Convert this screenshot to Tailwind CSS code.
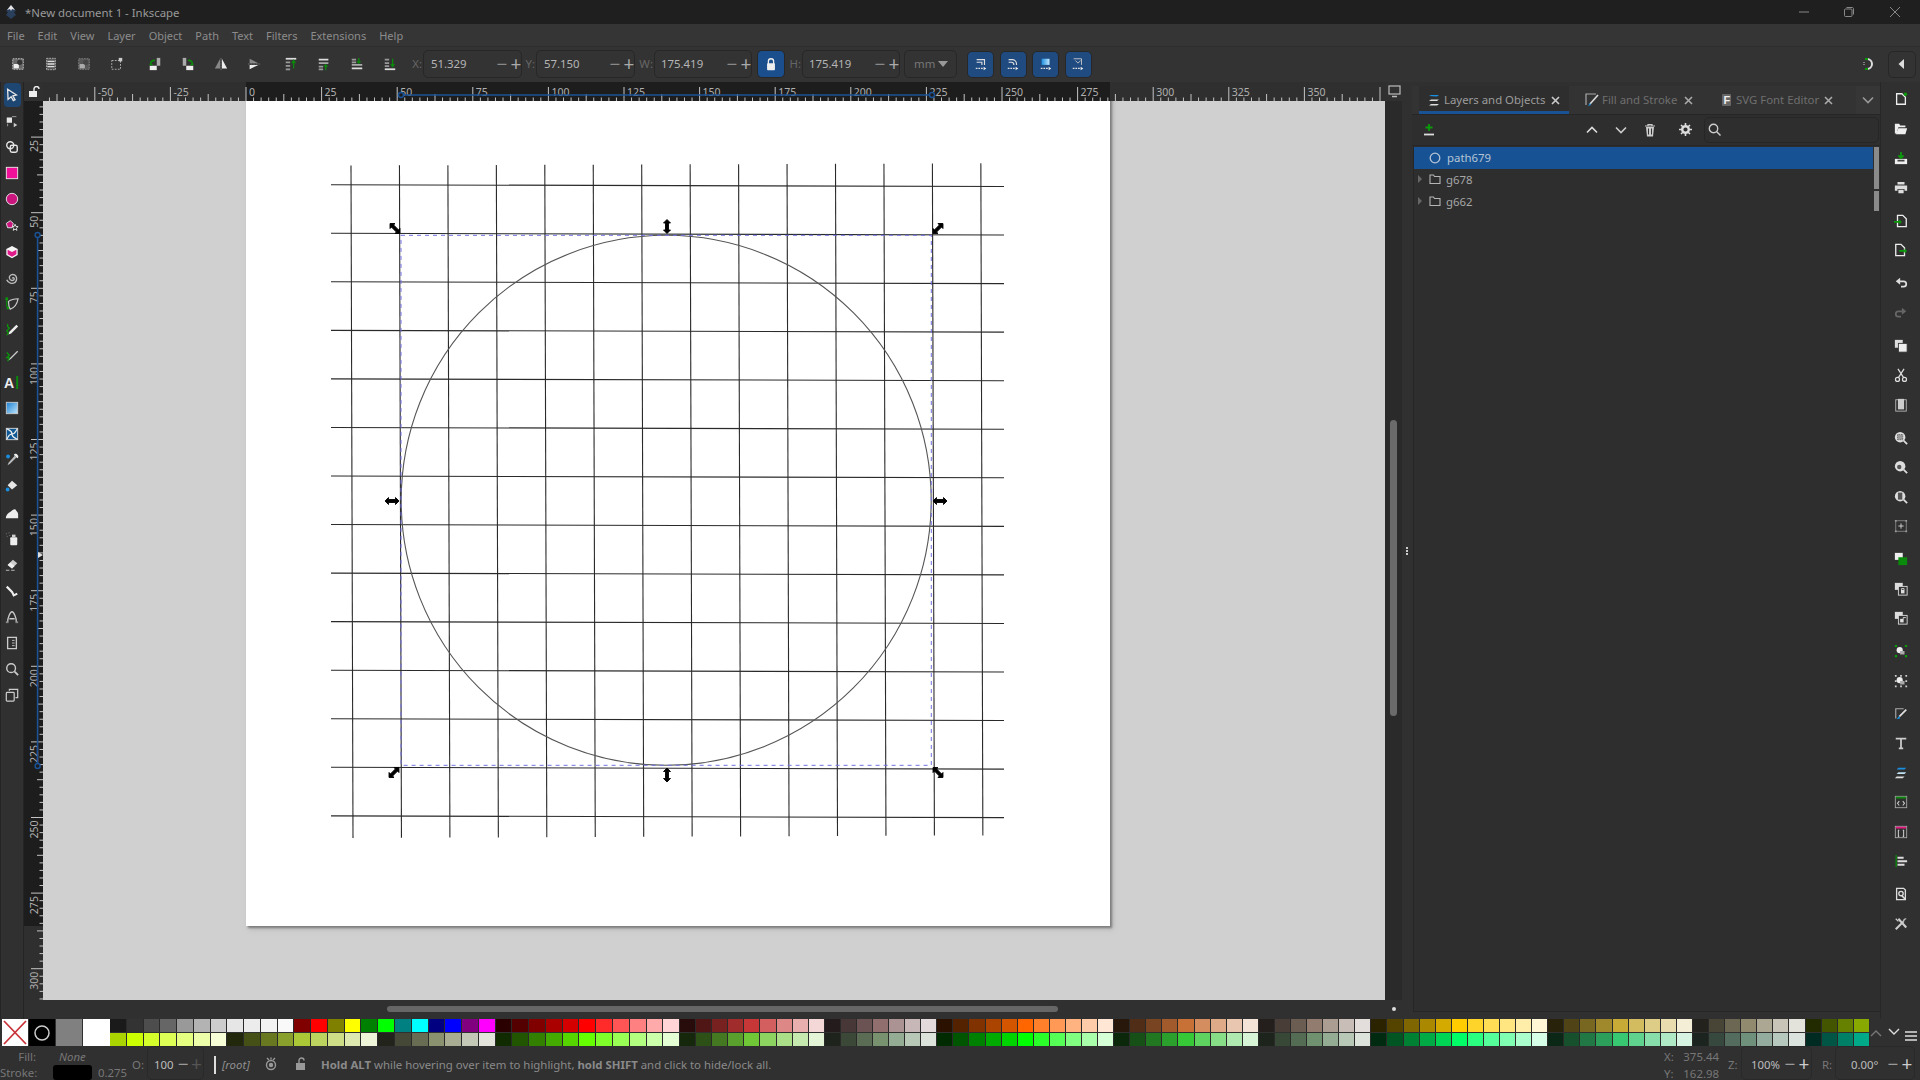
<!DOCTYPE html>
<html lang="en">
<head>
<meta charset="UTF-8">
<script src="https://cdn.jsdelivr.net/npm/@tailwindcss/browser@4"></script>
<title>*New document 1 - Inkscape</title>
</head>
<body class="w-[1920px] h-[1080px] overflow-hidden flex flex-col bg-[#303030] font-['Noto_Sans',sans-serif] text-[11.4px] text-[#a3a3a3]">

<!-- title bar -->
<div class="h-[24px] bg-[#1f1f1f] flex items-center">
  <svg class="w-4 h-4 ml-[3px]" viewBox="0 0 16 16"><path d="M8 1l5 6-2 1 2 3-5 4-5-4 2-3-2-1z" fill="#2a3f5c"/><path d="M8 1l4 5-3-1-1 2-1-2-3 1z" fill="#e6e6e6"/></svg>
  <span class="ml-[6px] pt-[2px] text-[#9a9a9a]">*New document 1 - Inkscape</span>
  <div class="ml-auto flex items-center h-full">
    <svg class="w-[12px] h-[12px] mr-[33px]" viewBox="0 0 12 12"><path d="M1 6h10" stroke="#888"/></svg>
    <svg class="w-[12px] h-[12px] mr-[34px]" viewBox="0 0 12 12" fill="none" stroke="#888"><rect x="1.5" y="3" width="7.5" height="7.5" rx="1"/><path d="M3.5 1.5h6a1.5 1.5 0 0 1 1 1v6"/></svg>
    <svg class="w-[12px] h-[12px] mr-[19px]" viewBox="0 0 12 12"><path d="M1 1l10 10M11 1L1 11" stroke="#888"/></svg>
  </div>
</div>

<!-- menu -->
<div class="h-[22px] bg-[#353535] flex items-center gap-[13px] pl-[7px] pt-[3px] text-[11px] text-[#8c8c8c]">
  <span>File</span><span>Edit</span><span>View</span><span>Layer</span><span>Object</span><span>Path</span><span>Text</span><span>Filters</span><span>Extensions</span><span>Help</span>
</div>

<!-- tool controls -->
<div class="h-[36px] bg-[#333333] border-t border-[#2e2e2e] flex items-center pl-[1px] pb-[1px]">
  <div class="w-[33px] flex justify-center"><svg class="w-[14px] h-[14px]" viewBox="0 0 16 16"><rect x="2" y="2" width="12" height="12" fill="#666" stroke="#ccc" stroke-dasharray="2 1"/><rect x="3" y="8" width="6" height="5" fill="#eee"/><circle cx="10" cy="6" r="3" fill="#333"/></svg></div>
  <div class="w-[33px] flex justify-center"><svg class="w-[14px] h-[14px]" viewBox="0 0 16 16"><rect x="3" y="1.5" width="10" height="13" fill="#555" stroke="#bbb" stroke-dasharray="2 1"/><path d="M4 5h8M4 8h8M4 11h8" stroke="#ddd" stroke-width="1.5"/></svg></div>
  <div class="w-[33px] flex justify-center"><svg class="w-[14px] h-[14px]" viewBox="0 0 16 16"><rect x="2" y="2" width="12" height="12" fill="#555" stroke="#888" stroke-dasharray="2 1"/><rect x="3" y="8" width="6" height="5" fill="#aaa"/><circle cx="10" cy="6" r="3" fill="#444"/></svg></div>
  <div class="w-[33px] flex justify-center"><svg class="w-[14px] h-[14px]" viewBox="0 0 16 16"><rect x="2" y="4" width="10" height="10" fill="none" stroke="#bbb" stroke-dasharray="2 1.5"/><rect x="10" y="1" width="4" height="4" fill="#ccc"/></svg></div>
  <div class="ml-[5px] w-[33px] flex justify-center"><svg class="w-[14px] h-[14px]" viewBox="0 0 16 16"><rect x="2" y="10" width="8" height="5" fill="#eee"/><rect x="10" y="1" width="4" height="9" fill="#aaa"/><path d="M3 8a4 4 0 0 1 5-4" fill="none" stroke="#0a8a0a" stroke-width="2"/><path d="M1 8h5l-2.500 2z" fill="#0a8a0a"/></svg></div>
  <div class="w-[33px] flex justify-center"><svg class="w-[14px] h-[14px]" viewBox="0 0 16 16"><rect x="6" y="10" width="8" height="5" fill="#eee"/><rect x="2" y="1" width="4" height="9" fill="#aaa"/><path d="M13 8a4 4 0 0 0-5-4" fill="none" stroke="#0a8a0a" stroke-width="2"/><path d="M15 8h-5l2.500 2z" fill="#0a8a0a"/></svg></div>
  <div class="w-[33px] flex justify-center"><svg class="w-[14px] h-[14px]" viewBox="0 0 16 16"><path d="M7 2v11L1 13z" fill="#888"/><path d="M9 2v11l6 0z" fill="#eee"/><path d="M8 1v14" stroke="#777" stroke-dasharray="2 1"/></svg></div>
  <div class="w-[33px] flex justify-center"><svg class="w-[14px] h-[14px]" viewBox="0 0 16 16"><path d="M3 7h10L3 2z" fill="#888"/><path d="M3 9h10L3 14z" fill="#eee"/><path d="M1 8h14" stroke="#777" stroke-dasharray="2 1"/></svg></div>
  <div class="ml-[4px] w-[33px] flex justify-center"><svg class="w-[14px] h-[14px]" viewBox="0 0 16 16"><path d="M2 2h12" stroke="#ddd" stroke-width="2"/><path d="M2 6h5M2 10h5M2 14h5" stroke="#999" stroke-width="2"/><path d="M11 13V5M9 7l2-3 2 3" fill="none" stroke="#0a8a0a" stroke-width="1.500"/></svg></div>
  <div class="w-[33px] flex justify-center"><svg class="w-[14px] h-[14px]" viewBox="0 0 16 16"><path d="M2 3h11" stroke="#ddd" stroke-width="2"/><path d="M2 7h11" stroke="#aaa" stroke-width="2"/><path d="M2 11h5M2 14h5" stroke="#999" stroke-width="2"/><path d="M10 15v-5M8 11l2-2 2 2" fill="none" stroke="#0a8a0a" stroke-width="1.500"/></svg></div>
  <div class="w-[33px] flex justify-center"><svg class="w-[14px] h-[14px]" viewBox="0 0 16 16"><path d="M2 9h12" stroke="#aaa" stroke-width="2"/><path d="M2 13h12" stroke="#ddd" stroke-width="2"/><path d="M2 3h5M2 6h5" stroke="#999" stroke-width="2"/><path d="M10 1v5M8 5l2 2 2-2" fill="none" stroke="#0a8a0a" stroke-width="1.500"/></svg></div>
  <div class="w-[33px] flex justify-center"><svg class="w-[14px] h-[14px]" viewBox="0 0 16 16"><path d="M2 14h12" stroke="#ddd" stroke-width="2"/><path d="M2 3h5M2 7h5M2 10.500h5" stroke="#999" stroke-width="2"/><path d="M11 2v8M9 8l2 3 2-3" fill="none" stroke="#0a8a0a" stroke-width="1.500"/></svg></div>

  <span class="w-[17px] pr-[1px] text-right text-[#666]">X:</span>
  <div class="w-[99px] h-[28px] border border-[#272727] rounded-[5px] flex items-center pl-[7px] text-[#b5b5b5]"><span class="flex-1">51.329</span><span class="w-[14px] text-center text-[19px] text-[#888]">−</span><span class="w-[14px] mr-[-2px] text-center text-[19px] text-[#aaa]">+</span></div>
  <span class="w-[14px] text-right pr-[1px] text-[#666]">Y:</span>
  <div class="w-[99px] h-[28px] border border-[#272727] rounded-[5px] flex items-center pl-[7px] text-[#b5b5b5]"><span class="flex-1">57.150</span><span class="w-[14px] text-center text-[19px] text-[#888]">−</span><span class="w-[14px] mr-[-2px] text-center text-[19px] text-[#aaa]">+</span></div>
  <span class="w-[19px] text-right pr-[1px] text-[#666]">W:</span>
  <div class="w-[98px] h-[28px] border border-[#272727] rounded-[5px] flex items-center pl-[6px] text-[#b5b5b5]"><span class="flex-1">175.419</span><span class="w-[14px] text-center text-[19px] text-[#888]">−</span><span class="w-[14px] mr-[-2px] text-center text-[19px] text-[#aaa]">+</span></div>
  <div class="ml-[5px] w-[28px] h-[28px] rounded-[5px] border border-[#272727] bg-[#1a4e8c] flex items-center justify-center"><svg class="w-[14px] h-[14px]" viewBox="0 0 16 16"><path d="M5 8V5a3 3 0 0 1 6 0v3" fill="none" stroke="#eee" stroke-width="1.500"/><rect x="3.500" y="7" width="9" height="8" rx="1" fill="#eee"/></svg></div>
  <span class="w-[17px] text-right pr-[1px] text-[#666]">H:</span>
  <div class="w-[98px] h-[28px] border border-[#272727] rounded-[5px] flex items-center pl-[6px] text-[#b5b5b5]"><span class="flex-1">175.419</span><span class="w-[14px] text-center text-[19px] text-[#888]">−</span><span class="w-[14px] mr-[-2px] text-center text-[19px] text-[#aaa]">+</span></div>
  <div class="ml-[4px] w-[53px] h-[28px] border border-[#272727] rounded-[5px] flex items-center pl-[9px] text-[#777]"><span>mm</span><svg class="w-[10px] h-[10px] ml-[3px]" viewBox="0 0 10 10"><path d="M0 2h10L5 8z" fill="#999"/></svg></div>

  <div class="ml-[10px] w-[27px] h-[27px] rounded-[5px] border border-[#272727] bg-[#1f4b80] flex items-center justify-center"><svg class="w-[14px] h-[14px]" viewBox="0 0 16 16"><path d="M3 3h9v6M3 6h6v3" fill="none" stroke="#ddd" stroke-width="1.300"/><path d="M2 13h9" stroke="#ddd" stroke-dasharray="2 1" stroke-width="1.500"/><path d="M11 11l3 2-3 2z" fill="#eee"/></svg></div>
  <div class="ml-[5.5px] w-[27px] h-[27px] rounded-[5px] border border-[#272727] bg-[#1f4b80] flex items-center justify-center"><svg class="w-[14px] h-[14px]" viewBox="0 0 16 16"><path d="M3 3h4a5 5 0 0 1 5 5v1M3 6h3a3 3 0 0 1 3 3" fill="none" stroke="#ddd" stroke-width="1.300"/><path d="M2 13h9" stroke="#ddd" stroke-dasharray="2 1" stroke-width="1.500"/><path d="M11 11l3 2-3 2z" fill="#eee"/></svg></div>
  <div class="ml-[5.5px] w-[27px] h-[27px] rounded-[5px] border border-[#272727] bg-[#1f4b80] flex items-center justify-center"><svg class="w-[14px] h-[14px]" viewBox="0 0 16 16"><defs><linearGradient id="g1" x1="0" y1="0" x2="1" y2="0"><stop offset="0" stop-color="#1e90e0"/><stop offset="1" stop-color="#bfe6ff"/></linearGradient></defs><rect x="3" y="2" width="9" height="7" fill="url(#g1)"/><path d="M2 13h9" stroke="#ddd" stroke-dasharray="2 1" stroke-width="1.500"/><path d="M11 11l3 2-3 2z" fill="#eee"/></svg></div>
  <div class="ml-[5.5px] w-[27px] h-[27px] rounded-[5px] border border-[#272727] bg-[#1f4b80] flex items-center justify-center"><svg class="w-[14px] h-[14px]" viewBox="0 0 16 16"><path d="M3 2h9v7" fill="none" stroke="#ccc"/><path d="M5 4l3 3 3-3" fill="none" stroke="#ccc"/><path d="M2 13h9" stroke="#ddd" stroke-dasharray="2 1" stroke-width="1.500"/><path d="M11 11l3 2-3 2z" fill="#eee"/></svg></div>

  <svg class="w-4 h-4 ml-auto mr-[11px]" viewBox="0 0 16 16"><path d="M6 3a5 5 0 0 1 0 10" fill="none" stroke="#ddd" stroke-width="2"/><path d="M4 2h3v2H4zM4 12h3v2H4z" fill="#0a9a0a"/><path d="M3 6v4" stroke="#ccc" stroke-dasharray="1 1"/></svg>
  <div class="w-[28px] h-[27px] mr-[4px] border border-[#272727] rounded-[5px] flex items-center justify-center"><svg class="w-3 h-3" viewBox="0 0 12 12"><path d="M8 1v10L2.500 6z" fill="#ddd"/></svg></div>
</div>

<!-- main row -->
<div class="h-[937px] flex">
  <!-- left toolbox -->
  <div class="w-[24px] flex flex-col items-center border-l border-r border-[#242424]">
    <div class="w-[17px] h-[24px] mb-[1.1px] mt-[1px] rounded-[4px] bg-[#1e4673] flex items-center justify-center"><svg class="w-[14px] h-[14px]" viewBox="0 0 16 16"><path d="M3 1.500l10 6.500-4 1 2.500 4.500-2 1-2.500-4.500-3.500 3z" fill="#1e4673" stroke="#e8e8e8" stroke-width="1.500"/></svg></div>
    <div class="h-[26.1px] flex items-center"><svg class="w-[14px] h-[14px]" viewBox="0 0 16 16"><rect x="2" y="4" width="6" height="6" fill="#e6e6e6"/><path d="M8 3h5M3 11v3" stroke="#aaa"/><path d="M10 10l4 2.500-4 2.500z" fill="#ccc"/></svg></div>
    <div class="h-[26.1px] flex items-center"><svg class="w-[14px] h-[14px]" viewBox="0 0 16 16" fill="none" stroke="#e6e6e6" stroke-width="1.600"><circle cx="6" cy="6" r="4"/><rect x="6" y="6" width="8" height="8" rx="2"/></svg></div>
    <div class="h-[26.1px] flex items-center"><svg class="w-[14px] h-[14px]" viewBox="0 0 16 16"><rect x="1.500" y="1.500" width="13" height="13" fill="#f0109a" stroke="#eee"/></svg></div>
    <div class="h-[26.1px] flex items-center"><svg class="w-[14px] h-[14px]" viewBox="0 0 16 16"><circle cx="8" cy="8" r="6.500" fill="#c9157d" stroke="#eee"/></svg></div>
    <div class="h-[26.1px] flex items-center"><svg class="w-[14px] h-[14px]" viewBox="0 0 16 16"><path d="M6 2l3.500 3-1.500 5-5 0L1.500 5z" fill="#c9157d" stroke="#eee"/><path d="M11.500 6l1 2.500 2.500.2-2 1.800.6 2.500-2.100-1.400-2.100 1.400.6-2.500-2-1.800 2.500-.2z" fill="#333" stroke="#eee"/></svg></div>
    <div class="h-[26.1px] flex items-center"><svg class="w-[14px] h-[14px]" viewBox="0 0 16 16"><path d="M8 1l6.500 3.500v7L8 15l-6.500-3.500v-7z" fill="#f4f4f4"/><path d="M8 8L3 5.300v5.200L8 13.500zM8 8l5-2.700v5.200L8 13.500z" fill="#e01a8a"/></svg></div>
    <div class="h-[26.1px] flex items-center"><svg class="w-[14px] h-[14px]" viewBox="0 0 16 16"><path d="M8.500 8.500c0-1.500 2.500-1 2 1-.6 2-5 2-5.500-1.500C4.500 5 8 3 11 4.500c3 1.700 3 6.500.5 8.500-3 2.200-8 1-9.500-3" fill="none" stroke="#bbb" stroke-width="1.600"/></svg></div>
    <div class="h-[26.1px] flex items-center"><svg class="w-[14px] h-[14px]" viewBox="0 0 16 16"><path d="M2 2v9" stroke="#0a8a0a" stroke-width="1.500"/><rect x="0.500" y="0.500" width="3" height="3" fill="#0a9a0a"/><rect x="2" y="11" width="3" height="3" fill="#0a9a0a"/><path d="M4 5c4-3 8-3 11-3-1 5-3 10-9 12-2-3-2-6-2-9z" fill="none" stroke="#ccc" stroke-width="1.400"/></svg></div>
    <div class="h-[26.1px] flex items-center"><svg class="w-[14px] h-[14px]" viewBox="0 0 16 16"><path d="M3 1v3l2 2-3 3 2 2-2 3" fill="none" stroke="#0a9a0a" stroke-width="1.400"/><path d="M13 2l2 2-8 8-3 1 1-3z" fill="#eee"/></svg></div>
    <div class="h-[26.1px] flex items-center"><svg class="w-[14px] h-[14px]" viewBox="0 0 16 16"><path d="M2 4l3 3-3 3 3 0-2 4" fill="none" stroke="#0a9a0a" stroke-width="1.400"/><path d="M14 2l1 1-8 8-3 2 2-3z" fill="#ccc"/></svg></div>
    <div class="h-[26.1px] flex items-center"><svg class="w-[17px] h-[15px]" viewBox="0 0 18 16"><text x="0" y="14" font-size="15" font-weight="700" font-family="Liberation Sans" fill="#eee">A</text><rect x="13" y="1" width="2" height="14" fill="#0a8a0a"/></svg></div>
    <div class="h-[26.1px] flex items-center"><svg class="w-[14px] h-[14px]" viewBox="0 0 16 16"><defs><linearGradient id="g2" x1="0" y1="0" x2="1" y2="1"><stop offset="0" stop-color="#1a7fd0"/><stop offset="1" stop-color="#bfe6ff"/></linearGradient></defs><rect x="1.500" y="1.500" width="13" height="13" fill="url(#g2)" stroke="#ccc"/></svg></div>
    <div class="h-[26.1px] flex items-center"><svg class="w-[14px] h-[14px]" viewBox="0 0 16 16"><rect x="1.500" y="1.500" width="13" height="13" fill="#0f5a96" stroke="#ddd"/><path d="M8 8C8 4 5 4 2 2M8 8c4 0 4-3 6-6M8 8c0 4 3 4 6 6M8 8c-4 0-4 3-6 6" fill="none" stroke="#eee" stroke-width="1.400"/></svg></div>
    <div class="h-[26.1px] flex items-center"><svg class="w-[14px] h-[14px]" viewBox="0 0 16 16"><circle cx="3.500" cy="4" r="2.200" fill="#1a8fe0"/><path d="M11 3l2 2-7 7-3 2 1-3z" fill="#bbb"/><path d="M10 2l4 4 1-1c1-2-2-5-4-4z" fill="#eee"/></svg></div>
    <div class="h-[26.1px] flex items-center"><svg class="w-[14px] h-[14px]" viewBox="0 0 16 16"><path d="M8 2l6 5-6 5-5-5z" fill="#e6e6e6"/><circle cx="3" cy="12" r="2.200" fill="#1a8fe0"/></svg></div>
    <div class="h-[26.1px] flex items-center"><svg class="w-[14px] h-[14px]" viewBox="0 0 16 16"><path d="M1 14c0-4 3-6 6-8 2-2 4-3 5-2 1 2 3 3 3 5v5z" fill="#eee"/></svg></div>
    <div class="h-[26.1px] flex items-center"><svg class="w-[14px] h-[14px]" viewBox="0 0 16 16"><rect x="6" y="6" width="8" height="9" rx="1" fill="#eee"/><rect x="8" y="3" width="4" height="3" fill="#ccc"/><path d="M1 2h1M4 1h1M2 5h1M5 4h1" stroke="#888"/></svg></div>
    <div class="h-[26.1px] flex items-center"><svg class="w-[14px] h-[14px]" viewBox="0 0 16 16"><path d="M3 8l6-6 5 4-6 6z" fill="#ccc"/><path d="M3 8l3-3 5 4-3 3z" fill="#eee"/><path d="M1 14h4M7 14h4" stroke="#ccc"/></svg></div>
    <div class="h-[26.1px] flex items-center"><svg class="w-[14px] h-[14px]" viewBox="0 0 16 16"><path d="M2 3l6 6 2 4 4-2" fill="none" stroke="#eee" stroke-width="2.500"/></svg></div>
    <div class="h-[26.1px] flex items-center"><svg class="w-[14px] h-[14px]" viewBox="0 0 16 16"><path d="M3 14c0-5 3-12 5-12s5 7 5 12M5 10h6" fill="none" stroke="#ccc" stroke-width="1.500"/><rect x="1" y="13" width="3" height="2" fill="#888"/><rect x="12" y="13" width="3" height="2" fill="#888"/></svg></div>
    <div class="h-[26.1px] flex items-center"><svg class="w-[14px] h-[14px]" viewBox="0 0 16 16"><path d="M3 1.500h10v13H3z" fill="none" stroke="#ccc" stroke-width="1.500"/><path d="M8 5h3M8 8h3M8 11h3" stroke="#ccc"/></svg></div>
    <div class="h-[26.1px] flex items-center"><svg class="w-[14px] h-[14px]" viewBox="0 0 16 16"><circle cx="7" cy="7" r="5" fill="none" stroke="#ccc" stroke-width="1.600"/><path d="M11 11l4 4" stroke="#ccc" stroke-width="2"/></svg></div>
    <div class="h-[26.1px] flex items-center"><svg class="w-[14px] h-[14px]" viewBox="0 0 16 16" fill="none" stroke="#ccc" stroke-width="1.400"><rect x="1.500" y="5" width="9" height="10" rx="1"/><path d="M5 3V1.500h9.500V11H12"/></svg></div>
  </div>

  <!-- canvas column -->
  <div class="w-[1388px] flex flex-col">
    <div class="h-[19px] flex">
      <div class="w-[19px] bg-[#303030] flex items-center justify-center"><svg class="w-[12px] h-[12px]" viewBox="0 0 12 12"><rect x="1" y="5" width="8" height="6" fill="#eee"/><path d="M6 5V3a2.500 2.500 0 0 1 5 0" fill="none" stroke="#eee" stroke-width="1.400"/></svg></div>
      <svg id="rulerTop" class="w-[1342px] h-[19px] bg-[#2f2f2f]" viewBox="43 82 1342 19"><rect x="246" y="82" width="864" height="19" fill="#1d1d1d"/></svg>
      <div class="w-[18px] flex items-center justify-center"><svg class="w-[13px] h-[13px]" viewBox="0 0 13 13"><rect x="1" y="1" width="11" height="8" fill="none" stroke="#bbb" stroke-width="1.200"/><path d="M4 11.500h5" stroke="#bbb" stroke-width="1.500"/></svg></div>
    </div>
    <div class="h-[899px] flex">
      <svg id="rulerLeft" class="w-[19px] h-[899px] bg-[#2f2f2f]" viewBox="24 101 19 899"><rect x="24" y="101" width="19" height="825" fill="#1d1d1d"/></svg>
      <div class="relative w-[1342px] h-[899px] overflow-hidden bg-[#d0d0d0]">
        <div class="absolute left-[203px] top-[-40px] w-[864px] h-[865px] bg-white shadow-[2px_2px_2px_#7d7d7d,3px_3px_6px_#b5b5b5]"></div>
        <svg id="art" class="absolute left-0 top-0 w-[1342px] h-[899px]" viewBox="43 101 1342 899">
          <circle cx="666.2" cy="500.3" r="265" fill="none" stroke="#555" stroke-width="1.100"/>
          <rect x="401" y="235.300" width="530.300" height="530" fill="none" stroke="#7272e0" stroke-dasharray="4 4"/>
          <g fill="#000" stroke="#000" stroke-width="0.900">
            <path transform="translate(395 228.500) rotate(45)" d="M-7 0l3.500-3.500v2h7v-2L7 0 3.500 3.500v-2h-7v2z"/>
            <path transform="translate(667 226.500) rotate(90)" d="M-7 0l3.500-3.500v2h7v-2L7 0 3.500 3.500v-2h-7v2z"/>
            <path transform="translate(938 228.500) rotate(-45)" d="M-7 0l3.500-3.500v2h7v-2L7 0 3.500 3.500v-2h-7v2z"/>
            <path transform="translate(392 501)" d="M-7 0l3.500-3.500v2h7v-2L7 0 3.500 3.500v-2h-7v2z"/>
            <path transform="translate(940 501)" d="M-7 0l3.500-3.500v2h7v-2L7 0 3.500 3.500v-2h-7v2z"/>
            <path transform="translate(394 772.500) rotate(-45)" d="M-7 0l3.500-3.500v2h7v-2L7 0 3.500 3.500v-2h-7v2z"/>
            <path transform="translate(667 775) rotate(90)" d="M-7 0l3.500-3.500v2h7v-2L7 0 3.500 3.500v-2h-7v2z"/>
            <path transform="translate(938 772.500) rotate(45)" d="M-7 0l3.500-3.500v2h7v-2L7 0 3.500 3.500v-2h-7v2z"/>
          </g>
        </svg>
      </div>
      <div class="relative w-[17px] bg-[#2a2a2a] flex justify-center">
        <div class="mt-[319px] w-[7px] h-[296px] rounded-full bg-[#6b6b6b]"></div>
      </div>
      <div class="w-[10px] flex items-center justify-center"><div class="flex flex-col gap-[1px]"><div class="w-[2px] h-[2px] bg-[#ccc]"></div><div class="w-[2px] h-[2px] bg-[#ccc]"></div><div class="w-[2px] h-[2px] bg-[#ccc]"></div></div></div>
    </div>
    <div class="h-[19px] flex">
      <div class="ml-[363px] mt-[6px] w-[671px] h-[6px] rounded-full bg-[#666666]"></div>
      <div class="ml-[334px] mt-[7px] w-[4px] h-[4px] rounded-full bg-[#ddd]"></div>
    </div>
  </div>

  <!-- docked dialogs -->
  <div class="w-[468px] flex flex-col pb-[7px]">
    <div class="h-[29px] mt-[4px] flex items-stretch bg-[#333333] border-b border-[#262626]">
      <div class="ml-[7px] w-[150px] flex items-center bg-[#2e2e2e] border-b-[3px] border-[#1a5296] pl-[8px] pt-[3px]">
        <svg class="w-[14px] h-[14px]" viewBox="0 0 14 14"><path d="M2 3l2-1h8l-2 1.500z" fill="#1a8fe0"/><path d="M2 8l2-1.500h8L10 8z" fill="#ddd"/><path d="M2 12.500l2-1.500h8l-2 1.500z" fill="#ddd"/></svg>
        <span class="ml-[3px] text-[#9c9c9c]">Layers and Objects</span>
        <svg class="w-[9px] h-[9px] ml-[6px]" viewBox="0 0 9 9"><path d="M1 1l7 7M8 1L1 8" stroke="#ccc" stroke-width="1.600"/></svg>
      </div>
      <div class="w-[136px] flex items-center pl-[16px]">
        <svg class="w-[14px] h-[14px]" viewBox="0 0 14 14"><path d="M11 1H1v11" fill="none" stroke="#aaa" stroke-width="1.200"/><path d="M13 2L5 11" stroke="#ddd" stroke-width="1.600"/><path d="M5 10l-2 3 3-1z" fill="#1a8fe0"/></svg>
        <span class="ml-[3px] text-[#6f6f6f]">Fill and Stroke</span>
        <svg class="w-[9px] h-[9px] ml-[7px]" viewBox="0 0 9 9"><path d="M1 1l7 7M8 1L1 8" stroke="#aaa" stroke-width="1.600"/></svg>
      </div>
      <div class="w-[150px] flex items-center pl-[16px]">
        <svg class="w-[12px] h-[14px]" viewBox="0 0 12 14"><rect x="1" y="1" width="9" height="12" rx="1" fill="#666"/><text x="2.500" y="11" font-size="11" font-weight="700" font-family="Liberation Sans" fill="#eee">F</text></svg>
        <span class="ml-[3px] text-[#6f6f6f]">SVG Font Editor</span>
        <svg class="w-[9px] h-[9px] ml-[5px]" viewBox="0 0 9 9"><path d="M1 1l7 7M8 1L1 8" stroke="#aaa" stroke-width="1.600"/></svg>
      </div>
      <div class="ml-[1px] w-[24px] bg-[#363636] flex items-center justify-center"><svg class="w-[12px] h-[12px]" viewBox="0 0 12 12"><path d="M1 3.500l5 5 5-5" fill="none" stroke="#999" stroke-width="1.600"/></svg></div>
    </div>
    <div class="h-[31px] flex items-center bg-[#2e2e2e] border-b border-[#272727] pb-[1px]">
      <svg class="w-[14px] h-[14px] ml-[10px]" viewBox="0 0 14 14"><path d="M7 1v7M3.500 4.500h7" stroke="#0a9a0a" stroke-width="1.800"/><path d="M2 11.500h10" stroke="#ddd" stroke-width="1.800"/></svg>
      <svg class="w-[12px] h-[12px] ml-[150px]" viewBox="0 0 12 12"><path d="M1 8.500l5-5 5 5" fill="none" stroke="#ddd" stroke-width="1.600"/></svg>
      <svg class="w-[12px] h-[12px] ml-[17px]" viewBox="0 0 12 12"><path d="M1 3.500l5 5 5-5" fill="none" stroke="#ccc" stroke-width="1.600"/></svg>
      <svg class="w-[12px] h-[14px] ml-[17px]" viewBox="0 0 12 14"><path d="M1 3h10M4 3V1.500h4V3" fill="none" stroke="#ccc" stroke-width="1.200"/><path d="M2 4h8l-1 9.500H3z" fill="#ccc"/><path d="M4.500 5.500v6M7.500 5.500v6" stroke="#333"/></svg>
      <svg class="w-[13px] h-[13px] ml-[23px]" viewBox="0 0 13 13"><circle cx="6.500" cy="6.500" r="3.300" fill="none" stroke="#ddd" stroke-width="2.400"/><path d="M6.500 0v2.500M6.500 10.500V13M0 6.500h2.500M10.500 6.500H13M2 2l1.800 1.800M9.200 9.200L11 11M11 2L9.200 3.800M3.800 9.200L2 11" stroke="#ddd" stroke-width="1.600"/></svg>
      <div class="ml-[12px] w-[175px] h-[26px] border border-[#262626] rounded-[5px] flex items-center pl-[3px]"><svg class="w-[13px] h-[13px]" viewBox="0 0 13 13"><circle cx="5.500" cy="5.500" r="4.200" fill="none" stroke="#ccc" stroke-width="1.400"/><path d="M8.500 8.500l4 4" stroke="#ccc" stroke-width="1.400"/></svg></div>
    </div>
    <div class="flex-1 bg-[#2e2e2e] border-b border-l border-[#262626] ml-[1px] pt-[1px] text-[#a6a6a6]">
      <div class="h-[21.67px] flex items-center">
        <div class="w-[459px] h-full flex items-center bg-[#175394] pl-[15px] text-[#b5c4d6]"><svg class="w-[12px] h-[12px]" viewBox="0 0 12 12"><circle cx="6" cy="6" r="4.800" fill="none" stroke="#b5c4d6" stroke-width="1.300"/></svg><span class="ml-[6px]">path679</span></div>
        <div class="ml-[1px] w-[5px] h-full bg-[#8a8a8a]"></div>
      </div>
      <div class="h-[21.67px] flex items-center">
        <div class="w-[459px] h-full flex items-center pl-[3px]"><svg class="w-[6px] h-[8px]" viewBox="0 0 6 8"><path d="M1 0l4 4-4 4z" fill="#666"/></svg><svg class="w-[12px] h-[12px] ml-[6px]" viewBox="0 0 12 12"><path d="M1 2h3.500l1 1.500H11V10.500H1z" fill="none" stroke="#b5b5b5" stroke-width="1.100"/></svg><span class="ml-[5px]">g678</span></div>
        <div class="ml-[1px] w-[5px] h-[20px] bg-[#8a8a8a]"></div>
      </div>
      <div class="h-[21.67px] flex items-center">
        <div class="w-[459px] h-full flex items-center pl-[3px]"><svg class="w-[6px] h-[8px]" viewBox="0 0 6 8"><path d="M1 0l4 4-4 4z" fill="#666"/></svg><svg class="w-[12px] h-[12px] ml-[6px]" viewBox="0 0 12 12"><path d="M1 2h3.500l1 1.500H11V10.500H1z" fill="none" stroke="#b5b5b5" stroke-width="1.100"/></svg><span class="ml-[5px]">g662</span></div>
        <div class="ml-[1px] w-[5px] h-[20px] bg-[#8a8a8a]"></div>
      </div>
    </div>
  </div>

  <!-- commands bar -->
  <div class="w-[40px] border-l border-[#272727] pt-[2.25px] flex flex-col items-center text-[#ddd]">
    <div class="mb-[3.5px]">
      <div class="h-[29.5px] flex items-center"><svg class="w-[14px] h-[14px]" viewBox="0 0 16 16"><path d="M3 2h6l4 4v8H3z" fill="#333" stroke="#eee" stroke-width="1.500"/><circle cx="13" cy="2.500" r="2" fill="#0a9a0a"/></svg></div>
      <div class="h-[29.5px] flex items-center"><svg class="w-[14px] h-[14px]" viewBox="0 0 16 16"><path d="M1 2h5l1 2h6v2H5L3 13H1z" fill="#eee"/><path d="M5 7h10l-2 7H2z" fill="#eee"/></svg></div>
      <div class="h-[29.5px] flex items-center"><svg class="w-[14px] h-[14px]" viewBox="0 0 16 16"><path d="M1 9h14v6H1z" fill="#eee"/><path d="M4 10h8v2H4z" fill="#444"/><path d="M8 1v6M5 5l3 3 3-3" fill="none" stroke="#0a9a0a" stroke-width="2"/></svg></div>
      <div class="h-[29.5px] flex items-center"><svg class="w-[14px] h-[14px]" viewBox="0 0 16 16"><path d="M4 1h8v3H4zM1 5h14v6h-3v-2H4v2H1zM5 10h6v4H5z" fill="#ddd"/></svg></div>
    </div>
    <div class="mb-[3.5px]">
      <div class="h-[29.5px] flex items-center"><svg class="w-[14px] h-[14px]" viewBox="0 0 16 16"><path d="M4 1.500h6l4 4v9H4z" fill="none" stroke="#eee" stroke-width="1.500"/><path d="M0 9h8" stroke="#0a9a0a" stroke-width="2"/><path d="M6 6l3 3-3 3z" fill="#0a9a0a"/></svg></div>
      <div class="h-[29.5px] flex items-center"><svg class="w-[14px] h-[14px]" viewBox="0 0 16 16"><path d="M2 1.500h6l4 4v9H2z" fill="none" stroke="#eee" stroke-width="1.500"/><path d="M6 9h7" stroke="#0a9a0a" stroke-width="2"/><path d="M12 6l3 3-3 3z" fill="#0a9a0a"/></svg></div>
    </div>
    <div class="mb-[3.5px]">
      <div class="h-[29.5px] flex items-center"><svg class="w-[14px] h-[14px]" viewBox="0 0 16 16"><path d="M5 6h6a3 3 0 0 1 0 6H8" fill="none" stroke="#ddd" stroke-width="2"/><path d="M7 2L2 6l5 4z" fill="#ddd"/></svg></div>
      <div class="h-[29.5px] flex items-center"><svg class="w-[14px] h-[14px]" viewBox="0 0 16 16"><path d="M11 6H5a3 3 0 0 0 0 6h3" fill="none" stroke="#666" stroke-width="2"/><path d="M9 2l5 4-5 4z" fill="#666"/></svg></div>
    </div>
    <div class="mb-[3.5px]">
      <div class="h-[29.5px] flex items-center"><svg class="w-[14px] h-[14px]" viewBox="0 0 16 16"><rect x="1" y="1" width="9" height="9" fill="#ddd"/><rect x="5" y="5" width="10" height="10" fill="#eee" stroke="#333"/></svg></div>
      <div class="h-[29.5px] flex items-center"><svg class="w-[14px] h-[14px]" viewBox="0 0 16 16" fill="none" stroke="#ddd" stroke-width="1.400"><circle cx="4" cy="13" r="2.300"/><circle cx="12" cy="13" r="2.300"/><path d="M5 11L11.500 1M11 11L4.500 1"/></svg></div>
      <div class="h-[29.5px] flex items-center"><svg class="w-[14px] h-[14px]" viewBox="0 0 16 16"><rect x="2" y="2" width="12" height="13" fill="none" stroke="#bbb"/><rect x="4.500" y="1" width="7" height="12" fill="#ccc"/></svg></div>
    </div>
    <div class="mb-[3.5px]">
      <div class="h-[29.5px] flex items-center"><svg class="w-[14px] h-[14px]" viewBox="0 0 16 16"><circle cx="7" cy="7" r="6" fill="#ddd"/><rect x="4" y="4" width="6" height="6" fill="#999" stroke="#555" stroke-dasharray="1 1"/><path d="M11 11l4 4" stroke="#ddd" stroke-width="2"/></svg></div>
      <div class="h-[29.5px] flex items-center"><svg class="w-[14px] h-[14px]" viewBox="0 0 16 16"><circle cx="7" cy="7" r="6" fill="#ddd"/><circle cx="6" cy="8" r="2.500" fill="#555"/><path d="M11 11l4 4" stroke="#ddd" stroke-width="2"/></svg></div>
      <div class="h-[29.5px] flex items-center"><svg class="w-[14px] h-[14px]" viewBox="0 0 16 16"><circle cx="7" cy="7" r="6" fill="#ddd"/><rect x="4.500" y="3" width="5" height="8" fill="#555"/><path d="M11 11l4 4" stroke="#ddd" stroke-width="2"/></svg></div>
      <div class="h-[29.5px] flex items-center"><svg class="w-[14px] h-[14px]" viewBox="0 0 16 16"><rect x="2" y="2" width="12" height="12" fill="none" stroke="#888"/><path d="M8 5v6M5 8h6" stroke="#ddd"/><path d="M1 1h2v2H1zM13 1h2v2h-2zM1 13h2v2H1zM13 13h2v2h-2z" fill="#999"/></svg></div>
    </div>
    <div class="mb-[3.5px]">
      <div class="h-[29.5px] flex items-center"><svg class="w-[14px] h-[14px]" viewBox="0 0 16 16"><rect x="1" y="1" width="9" height="8" fill="#eee"/><rect x="5" y="6" width="10" height="9" fill="#0a8a0a"/></svg></div>
      <div class="h-[29.5px] flex items-center"><svg class="w-[14px] h-[14px]" viewBox="0 0 16 16"><rect x="1" y="1" width="9" height="8" fill="#ddd"/><rect x="5" y="5" width="10" height="10" fill="#333" stroke="#ddd"/><path d="M8 9h4v4H8z" fill="#ddd"/><path d="M8.500 9V7.500h3V9" fill="none" stroke="#ddd"/></svg></div>
      <div class="h-[29.5px] flex items-center"><svg class="w-[14px] h-[14px]" viewBox="0 0 16 16"><rect x="1" y="1" width="9" height="8" fill="#ddd"/><rect x="5" y="5" width="10" height="10" fill="#333" stroke="#ddd"/><path d="M7 9h4v4H7z" fill="#ddd"/><path d="M10.500 9V7.500h3" fill="none" stroke="#ddd"/></svg></div>
    </div>
    <div class="mb-[3.5px]">
      <div class="h-[29.5px] flex items-center"><svg class="w-[14px] h-[14px]" viewBox="0 0 16 16"><circle cx="6.500" cy="7" r="3.500" fill="#eee"/><rect x="7" y="8" width="5" height="4" fill="#aaa"/><path d="M1 1h2.500v2.500H1zM12.500 1H15v2.500h-2.500zM1 12.500h2.500V15H1zM12.500 12.500H15V15h-2.500z" fill="#0a9a0a"/></svg></div>
      <div class="h-[29.5px] flex items-center"><svg class="w-[14px] h-[14px]" viewBox="0 0 16 16"><circle cx="6.500" cy="7" r="3.500" fill="#eee"/><rect x="7" y="8" width="5" height="4" fill="#aaa"/><path d="M1 1h2v2H1zM7 1h2v2H7zM13 1h2v2h-2zM1 7h2v2H1zM13 7h2v2h-2zM1 13h2v2H1zM7 13h2v2H7zM13 13h2v2h-2z" fill="#ccc"/></svg></div>
    </div>
    <div class="mb-[3.5px]">
      <div class="h-[29.5px] flex items-center"><svg class="w-[14px] h-[14px]" viewBox="0 0 16 16"><path d="M11 2H2v11" fill="none" stroke="#aaa" stroke-width="1.300"/><path d="M14 3L6 11" stroke="#ddd" stroke-width="2"/><path d="M6 10l-3 4 4-1z" fill="#1a8fe0"/></svg></div>
      <div class="h-[29.5px] flex items-center"><svg class="w-[14px] h-[14px]" viewBox="0 0 16 16"><path d="M2 3h12M8 3v11M5.500 14h5" stroke="#ccc" stroke-width="2"/></svg></div>
      <div class="h-[29.5px] flex items-center"><svg class="w-[14px] h-[14px]" viewBox="0 0 16 16"><path d="M3 4l2-2h9l-2 2z" fill="#1a8fe0"/><path d="M3 9l2-2h9l-2 2z" fill="#bfe2f5"/><path d="M1 14l2-2h9l-2 2z" fill="#ddd"/></svg></div>
      <div class="h-[29.5px] flex items-center"><svg class="w-[14px] h-[14px]" viewBox="0 0 16 16"><rect x="1.500" y="1.500" width="13" height="13" fill="none" stroke="#aaa"/><rect x="2" y="2" width="12" height="2" fill="#0a8a0a"/><path d="M6 7L4 9.500 6 12M10 7l2 2.500L10 12" fill="none" stroke="#ccc" stroke-width="1.200"/></svg></div>
      <div class="h-[29.5px] flex items-center"><svg class="w-[14px] h-[14px]" viewBox="0 0 16 16"><rect x="1.500" y="1.500" width="13" height="13" fill="none" stroke="#aaa"/><rect x="2" y="2" width="12" height="2" fill="#e6187f"/><path d="M6 6H5v7h1M10 6h1v7h-1" fill="none" stroke="#ccc" stroke-width="1.200"/></svg></div>
      <div class="h-[29.5px] flex items-center"><svg class="w-[14px] h-[14px]" viewBox="0 0 16 16"><path d="M2.500 1v14" stroke="#0a8a0a" stroke-width="1.500"/><path d="M4 3h7v2.500H4zM4 7h11v2.500H4zM4 11h8v2.500H4z" fill="#ddd"/></svg></div>
    </div>
    <div>
      <div class="h-[29.5px] flex items-center"><svg class="w-[14px] h-[14px]" viewBox="0 0 16 16"><path d="M3 1.500h8l2 2v11H3z" fill="none" stroke="#ddd" stroke-width="1.500"/><circle cx="8" cy="7.500" r="2.500" fill="none" stroke="#ddd" stroke-width="1.500"/><path d="M9 10l4 4" stroke="#ddd" stroke-width="2"/></svg></div>
      <div class="h-[29.5px] flex items-center"><svg class="w-[14px] h-[14px]" viewBox="0 0 16 16"><path d="M2 14l9-9M5 2l9 10" stroke="#ccc" stroke-width="2.400"/><path d="M11 5a3 3 0 0 1 3-3M2 2l3 3" stroke="#ccc" stroke-width="1.400" fill="none"/></svg></div>
    </div>
  </div>
</div>

<!-- palette -->
<div class="h-[27px] flex items-stretch pl-[2px]">
  <div class="w-[26px] mr-[1px] bg-white"><svg class="w-[26px] h-[27px]" viewBox="0 0 26 27"><path d="M2 2l22 23M24 2L2 25" stroke="#c9343a" stroke-width="1.800"/></svg></div>
  <div class="w-[26px] mr-[1px] bg-black flex items-center justify-center"><svg class="w-[18px] h-[18px]" viewBox="0 0 18 18"><circle cx="9" cy="9" r="7" fill="none" stroke="#ccc" stroke-width="1.500"/></svg></div>
  <div class="w-[26px] mr-[1px] bg-[#808080]"></div>
  <div class="w-[27px] bg-white"></div>
  <div id="palette" class="w-[1757px] grid grid-cols-[repeat(34,16.78px)_repeat(74,16.08px)] gap-y-px"></div>
  <svg class="w-[12px] h-[27px] ml-[3px]" viewBox="0 0 12 27"><path d="M1 17l5-5 5 5" fill="none" stroke="#777" stroke-width="1.400"/></svg>
  <svg class="w-[12px] h-[27px] ml-[6px]" viewBox="0 0 12 27"><path d="M1 10l5 5 5-5" fill="none" stroke="#ddd" stroke-width="1.400"/></svg>
  <svg class="w-[12px] h-[27px] ml-[5px]" viewBox="0 0 12 27"><path d="M0 13h12M0 17h12M0 21h12" stroke="#ddd" stroke-width="1.400"/></svg>
</div>

<!-- status bar -->
<div class="h-[34px] flex items-center text-[#8a8a8a]">
  <div class="w-[127px] h-full flex flex-col text-[#777] pt-[2px]">
    <div class="h-[17px] flex items-center"><span class="w-[36px] text-right">Fill:</span><span class="ml-[23px] italic">None</span></div>
    <div class="h-[15px] flex items-center"><span class="w-[36px] text-right pt-[1px]">Stroke:</span><div class="ml-[17px] w-[39px] h-[15px] rounded-[3px] bg-black"></div><span class="ml-[6px] pt-[1px]">0.275</span></div>
  </div>
  <span class="ml-[5px] pt-[3px] w-[15px] text-[#777]">O:</span>
  <div class="w-[57px] h-[34px] border border-[#292929] rounded-[5px] flex items-center pl-[6px] pt-[3px] text-[#bdbdbd]"><span class="w-[24px]">100</span><span class="w-[14px] text-center text-[19px] text-[#999]">−</span><span class="w-[14px] text-center text-[19px] text-[#555]">+</span></div>
  <div class="ml-[10px] mt-[3px] w-[2px] h-[18px] bg-[#ddd]"></div>
  <span class="ml-[6px] pt-[3px] italic text-[#8f8f8f] w-[42px]">[root]</span>
  <svg class="w-[14px] h-[14px] mt-[2px]" viewBox="0 0 14 14" fill="none" stroke="#999" stroke-width="1.400"><circle cx="7" cy="8" r="4.500"/><circle cx="7" cy="8" r="1.500" fill="#999"/><path d="M3 1l2 2M11 1L9 3M7 0.500v2"/></svg>
  <svg class="w-[14px] h-[14px] mt-[2px] ml-[16px]" viewBox="0 0 14 14"><rect x="2" y="6" width="9" height="7" fill="#999"/><path d="M5 6V3.500a2.500 2.500 0 0 1 5 0" fill="none" stroke="#999" stroke-width="1.400"/></svg>
  <span class="ml-[13px] pt-[3px] text-[#8a8a8a]"><b>Hold ALT</b> while hovering over item to highlight, <b>hold SHIFT</b> and click to hide/lock all.</span>
  <div class="ml-auto w-[55px] flex flex-col text-[#777] pt-[2px]">
    <div class="h-[17px] flex justify-between"><span>X:</span><span>375.44</span></div>
    <div class="h-[15px] flex justify-between"><span>Y:</span><span>162.98</span></div>
  </div>
  <span class="ml-[9px] pt-[3px] w-[13px] text-[#777]">Z:</span>
  <div class="w-[71px] h-[34px] border border-[#292929] rounded-[5px] flex items-center pl-[9px] pt-[3px] text-[#bdbdbd]"><span class="flex-1">100%</span><span class="w-[14px] text-center text-[19px] text-[#999]">−</span><span class="w-[14px] text-center text-[19px] text-[#ccc]">+</span></div>
  <span class="ml-[10px] pt-[3px] w-[13px] text-[#777]">R:</span>
  <div class="w-[80px] h-[34px] mr-[5px] border border-[#292929] rounded-[5px] flex items-center pl-[15px] pt-[3px] text-[#bdbdbd]"><span class="flex-1">0.00°</span><span class="w-[14px] text-center text-[19px] text-[#999]">−</span><span class="w-[14px] text-center text-[19px] text-[#ccc]">+</span></div>
</div>

<script>
  // inkscape default palette, filled row by row
  const swatches = ("1a1a1a 333333 4d4d4d 666666 999999 b3b3b3 cccccc e6e6e6 ececec f2f2f2 f9f9f9 800000 ff0000 808000 ffff00 008000 00ff00 008080 00ffff 000080 0000ff 800080 ff00ff " +
    "2b0000 550000 800000 aa0000 d40000 ff0000 ff2a2a ff5555 ff8080 ffaaaa ffd5d5 280b0b 501616 782121 a02c2c c83737 d35f5f de8787 e9afaf f4d7d7 241c1c 483737 6c5353 916f6f ac9393 c8b7b7 e3dbdb " +
    "2b1100 552200 803300 aa4400 d45500 ff6600 ff7f2a ff9955 ffb380 ffccaa ffe6d5 28170b 502d16 784421 a05a2c c87137 d38d5f deaa87 e9c6af f4e3d7 241f1c 483e37 6c5d53 917c6f ac9d93 c8beb7 e3dedb " +
    "2b2200 554400 806600 aa8800 d4aa00 ffcc00 ffd42a ffdd55 ffe680 ffeeaa fff6d5 28220b 504416 786721 a0892c c8ab37 d3bc5f decd87 e9ddaf f4eed7 24221c 484537 6c6753 918a6f aca793 c8c4b7 e3e2db " +
    "222b00 445500 668000 88aa00 " +
    "aad400 ccff00 d4ff2a ddff55 e5ff80 eeffaa f6ffd5 22280b 445016 677821 89a02c abc837 bcd35f cdde87 dde9af eef4d7 22241c 454837 676c53 8a916f a7ac93 c4c8b7 e2e3db " +
    "112b00 225500 338000 44aa00 55d400 66ff00 7fff2a 99ff55 b3ff80 ccffaa e5ffd5 16280b 2d5016 447821 5aa02c 71c837 8dd35f aade87 c6e9af e3f4d7 1e241c 3c4837 5a6c53 78916f 93ac93 b7c8b7 dbe3db " +
    "002b00 005500 008000 00aa00 00d400 00ff00 2aff2a 55ff55 80ff80 aaffaa d5ffd5 0b280b 165016 217821 2ca02c 37c837 5fd35f 87de87 afe9af d7f4d7 1c241c 374837 536c53 6f916f 93ac93 b7c8b7 dbe3db " +
    "002b11 005522 008033 00aa44 00d455 00ff66 2aff80 55ff99 80ffb3 aaffcc d5ffe6 0b2816 16502d 217844 2ca05a 37c871 5fd38d 87deaa afe9c6 d7f4e3 1c241f 37483e 536c5d 6f917c 93ac9d b7c8be dbe3de " +
    "002b22 005544 008066 00aa88").split(" ");
  const palette = document.getElementById("palette");
  swatches.slice(0, 216).forEach(c => {
    const d = document.createElement("div");
    d.className = "border-r border-[#2a2a2a]";
    d.style.background = "#" + c;
    palette.appendChild(d);
  });

  const NS = "http://www.w3.org/2000/svg";
  function add(parent, tag, attrs, text) {
    const el = document.createElementNS(NS, tag);
    for (const k in attrs) el.setAttribute(k, attrs[k]);
    if (text !== undefined) el.textContent = text;
    parent.appendChild(el);
  }

  // drawing: the hand-ruled grid, very slightly skewed
  const art = document.getElementById("art");
  const first = art.firstElementChild;
  for (let i = 0; i < 14; i++) {
    const v = document.createElementNS(NS, "line");
    v.setAttribute("x1", 351 + 48.45 * i); v.setAttribute("x2", 353 + 48.45 * i);
    v.setAttribute("y1", 165.5 - 0.17 * i); v.setAttribute("y2", 838 - 0.2 * i);
    v.setAttribute("stroke", "#2a2a2a"); v.setAttribute("stroke-width", "1.1");
    art.insertBefore(v, first);
    const h = document.createElementNS(NS, "line");
    h.setAttribute("x1", 331); h.setAttribute("x2", 1004);
    h.setAttribute("y1", 184.7 + 48.55 * i); h.setAttribute("y2", 186.5 + 48.55 * i);
    h.setAttribute("stroke", "#2a2a2a"); h.setAttribute("stroke-width", "1.1");
    art.insertBefore(h, first);
  }

  // rulers: 25 units = 75.6px
  const top_ = document.getElementById("rulerTop");
  for (let n = -26; n <= 150; n++) {
    const u = n * 2.5, x = 246 + u * 3.024;
    const len = n % 10 === 0 ? 14 : n % 5 === 0 ? 7 : 3.5;
    add(top_, "line", { x1: x, x2: x, y1: 101 - len, y2: 101, stroke: "#c4c4c4" });
    if (n % 10 === 0 && u < 375) add(top_, "text", { x: x + 3, y: 96, fill: "#b0b0b0", "font-size": "10.5", "font-family": "Noto Sans" }, u);
  }
  add(top_, "line", { x1: 401, x2: 932, y1: 95, y2: 95, stroke: "#1b5296", "stroke-width": 1.6 });
  add(top_, "circle", { cx: 401, cy: 95, r: 2.5, fill: "#1d1d1d", stroke: "#1b5296", "stroke-width": 1.4 });
  add(top_, "circle", { cx: 932, cy: 95, r: 2.5, fill: "#1d1d1d", stroke: "#1b5296", "stroke-width": 1.4 });

  const left_ = document.getElementById("rulerLeft");
  for (let n = 6; n <= 125; n++) {
    const u = n * 2.5, y = 61.5 + u * 3.024;
    const len = n % 10 === 0 ? 12 : n % 5 === 0 ? 6 : 3.5;
    add(left_, "line", { x1: 43 - len, x2: 43, y1: y, y2: y, stroke: "#c4c4c4" });
    if (n % 10 === 0) add(left_, "text", { x: 38, y: y + 3, fill: "#b0b0b0", "font-size": "10.5", "font-family": "Noto Sans", "text-anchor": "end", transform: "rotate(-90 38 " + (y + 3) + ")" }, u);
  }
  add(left_, "line", { x1: 37.6, x2: 37.6, y1: 235, y2: 766, stroke: "#1b5296", "stroke-width": 1.6 });
  add(left_, "circle", { cx: 37.6, cy: 235, r: 2.5, fill: "#1d1d1d", stroke: "#1b5296", "stroke-width": 1.4 });
  add(left_, "circle", { cx: 37.6, cy: 766, r: 2.5, fill: "#1d1d1d", stroke: "#1b5296", "stroke-width": 1.4 });
  add(left_, "path", { d: "M38 552l5 3-5 3z", fill: "#ddd" });
</script>
</body>
</html>
